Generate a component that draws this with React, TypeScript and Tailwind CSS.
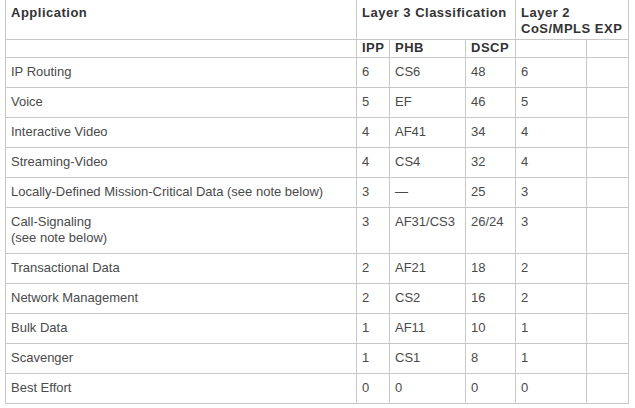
import React from "react";

type Row = {
  app: React.ReactNode;
  ipp: string;
  phb: string;
  dscp: string;
  l2: string;
};

const ROWS: Row[] = [
  { app: "IP Routing", ipp: "6", phb: "CS6", dscp: "48", l2: "6" },
  { app: "Voice", ipp: "5", phb: "EF", dscp: "46", l2: "5" },
  { app: "Interactive Video", ipp: "4", phb: "AF41", dscp: "34", l2: "4" },
  { app: "Streaming-Video", ipp: "4", phb: "CS4", dscp: "32", l2: "4" },
  { app: "Locally-Defined Mission-Critical Data (see note below)", ipp: "3", phb: "\u2014", dscp: "25", l2: "3" },
  {
    app: (
      <>
        Call-Signaling
        <br />
        (see note below)
      </>
    ),
    ipp: "3",
    phb: "AF31/CS3",
    dscp: "26/24",
    l2: "3",
  },
  { app: "Transactional Data", ipp: "2", phb: "AF21", dscp: "18", l2: "2" },
  { app: "Network Management", ipp: "2", phb: "CS2", dscp: "16", l2: "2" },
  { app: "Bulk Data", ipp: "1", phb: "AF11", dscp: "10", l2: "1" },
  { app: "Scavenger", ipp: "1", phb: "CS1", dscp: "8", l2: "1" },
  { app: "Best Effort", ipp: "0", phb: "0", dscp: "0", l2: "0" },
];

const head = "border-l border-[#c8c8c8] px-[5px] font-bold tracking-[0.5px] text-[#333] whitespace-nowrap";
const cell = "border-l border-t border-[#c8c8c8] px-[5px] pt-[6px] pb-[7px] whitespace-nowrap";

export default function App() {
  return (
    <div
      className="w-[635px] h-[408px] bg-white pl-[5px] overflow-hidden text-[13px] leading-[16px] text-[#4a4a4a]"
      style={{ fontFamily: "'Liberation Sans', Arial, sans-serif" }}
    >
      <div className="grid w-[624px] grid-cols-[351px_33px_76px_50px_71px_42px] border-r border-b border-[#c8c8c8]">
        {/* Header row 1 */}
        <div className={`${head} h-[39px] pt-[5px]`}>Application</div>
        <div className={`${head} col-span-3 h-[39px] pt-[5px]`}>Layer 3 Classification</div>
        <div className={`${head} col-span-2 h-[39px] pt-[5px]`}>
          Layer 2
          <br />
          CoS/MPLS EXP
        </div>

        {/* Header row 2 */}
        <div className={`${head} border-t h-[18px]`}></div>
        <div className={`${head} border-t h-[18px]`}>IPP</div>
        <div className={`${head} border-t h-[18px]`}>PHB</div>
        <div className={`${head} border-t h-[18px]`}>DSCP</div>
        <div className={`${head} border-t h-[18px]`}></div>
        <div className={`${head} border-t h-[18px]`}></div>

        {/* Body */}
        {ROWS.map((r, i) => (
          <React.Fragment key={i}>
            <div className={cell}>{r.app}</div>
            <div className={cell}>{r.ipp}</div>
            <div className={cell}>{r.phb}</div>
            <div className={cell}>{r.dscp}</div>
            <div className={cell}>{r.l2}</div>
            <div className={cell}></div>
          </React.Fragment>
        ))}
      </div>
    </div>
  );
}
